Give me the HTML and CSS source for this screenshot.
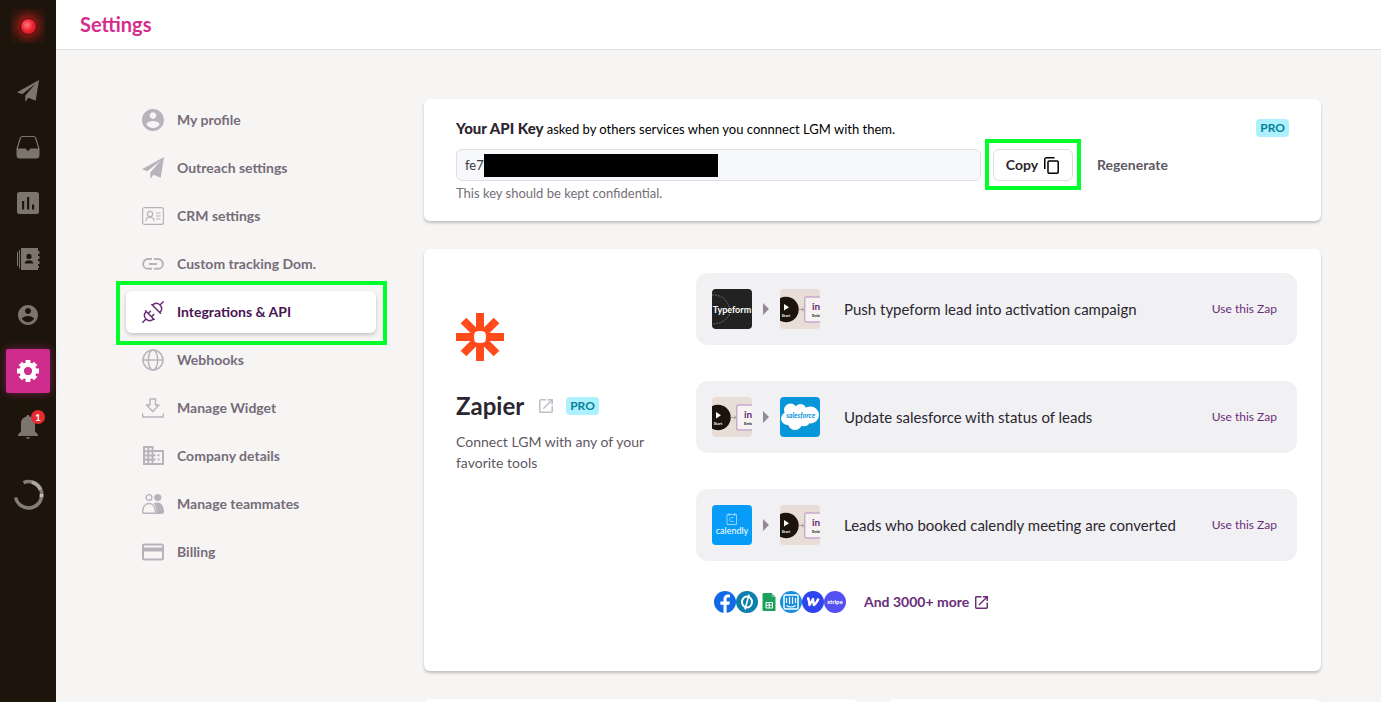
FILE: index.html
```html
<!DOCTYPE html>
<html lang="en">
<head>
<meta charset="utf-8">
<title>Settings</title>
<link rel="stylesheet" href="styles.css">
</head>
<body>
<svg class="defs" aria-hidden="true">
  <symbol id="account" viewBox="2 2 20 20"><path fill="currentColor" d="M12 2C6.480 2 2 6.480 2 12s4.480 10 10 10 10-4.480 10-10S17.520 2 12 2zm0 3c1.660 0 3 1.340 3 3s-1.340 3-3 3-3-1.340-3-3 1.340-3 3-3zm0 14.200c-2.500 0-4.710-1.280-6-3.220.030-1.990 4-3.080 6-3.080 1.990 0 5.970 1.090 6 3.080-1.290 1.940-3.500 3.220-6 3.220z"/></symbol>
  <symbol id="plane" viewBox="0 0 22 22"><path fill="currentColor" d="M22 0 0 12.200 5.200 14.300 18.600 3.800 8.300 15.600V21.800L11.500 17.800 18.700 20.700z"/></symbol>
  <symbol id="open" viewBox="3 3 18 18"><path fill="currentColor" d="M19 19H5V5h7V3H5a2 2 0 0 0-2 2v14a2 2 0 0 0 2 2h14c1.100 0 2-.900 2-2v-7h-2v7zM14 3v2h3.590l-9.830 9.830 1.410 1.410L19 6.410V10h2V3h-7z"/></symbol>
  <symbol id="campaign" viewBox="0 0 40 40">
    <rect width="40" height="40" fill="#e8ddd7"/>
    <circle cx="6" cy="20.500" r="12.700" fill="#1c140a"/>
    <path d="M4 15v6.500l5-3.250z" fill="#fff"/>
    <text class="tile-start" x="6" y="27.500">Start</text>
    <path d="M19 20.500h5m-2-2 2 2-2 2" stroke="#a9a09c" fill="none"/>
    <rect x="24.700" y="8" width="24" height="25" rx="2" fill="#f7f3f2" stroke="#c6aacb" stroke-width="1.400"/>
    <text class="tile-in" x="32" y="21">in</text>
    <text class="tile-embed" x="32" y="27.500">Emb</text>
  </symbol>
</svg>
<div class="app">
  <nav class="rail" aria-label="Main">
    <a class="brand" href="#" aria-label="Home"><span class="orb"></span></a>
    <a class="rail-item" href="#" aria-label="Campaigns"><svg width="22" height="22"><use href="#plane"/></svg></a>
    <a class="rail-item" href="#" aria-label="Inbox"><svg width="24" height="24" viewBox="0 0 24 24"><path d="M1 14 4.500 2.800Q5 1.500 6.500 1.500h11q1.500 0 2 1.300L23 14" fill="none" stroke="currentColor" stroke-width="1.200"/><path fill="currentColor" d="M.500 13.500h9.200l1.300 1.800q1 1.200 2 0l1.300-1.800h9.200v6.500a3.500 3.500 0 0 1-3.500 3.500H4a3.500 3.500 0 0 1-3.500-3.500z"/></svg></a>
    <a class="rail-item" href="#" aria-label="Reports"><svg width="22" height="22" viewBox="0 0 22 22"><path fill="currentColor" fill-rule="evenodd" d="M2.500 0h17A2.500 2.500 0 0 1 22 2.500v17a2.500 2.500 0 0 1-2.500 2.500h-17A2.500 2.500 0 0 1 0 19.500v-17A2.500 2.500 0 0 1 2.500 0zM5 9v8.500h2.200V9zm5-4v12.500h2.200V5zm5 7.500v5h2.200v-5z"/></svg></a>
    <a class="rail-item" href="#" aria-label="Contacts"><svg width="24" height="24" viewBox="0 0 24 24"><path fill="currentColor" fill-rule="evenodd" d="M5 1h17v3h1.500v3H22v2h1.500v3H22v2h1.500v3H22v2h1v2h-1v2H5zm8 5.800a2.600 2.600 0 1 0 0 5.200 2.600 2.600 0 0 0 0-5.200zM8.700 16.500h8.600c0-4.200-8.600-4.200-8.600 0z"/><path stroke="currentColor" d="M3.500 3v18.500M1.500 5v14"/></svg></a>
    <a class="rail-item" href="#" aria-label="Profile"><svg width="20" height="20"><use href="#account"/></svg></a>
    <a class="rail-item active" href="#" aria-label="Settings" aria-current="page"><svg width="22" height="22" viewBox="-11 -11 22 22" stroke="currentColor" fill="none"><circle r="6.300" stroke-width="4.400"/><path stroke-width="4.800" stroke-linejoin="round" d="M0-11v3M0 11V8M-11 0h3M11 0H8M-7.600-7.600l2 2M7.600 7.600l-2-2M-7.600 7.600l2-2M7.600-7.600l-2 2"/></svg></a>
    <a class="rail-item" href="#" aria-label="Notifications, 1 new"><svg width="20" height="24" viewBox="0 0 20 24"><path fill="currentColor" d="M10 0c1 0 1.500.600 1.500 1.600C15.200 2.400 17 5.200 17 9v7.500l3 3V21H0v-1.500l3-3V9c0-3.800 1.800-6.600 5.500-7.400C8.500.600 9 0 10 0zM8 22.200h4c0 2.200-4 2.200-4 0z"/></svg><span class="count">1</span></a>
    <div class="loader" role="status" aria-label="Loading"><svg width="32" height="32" viewBox="0 0 32 32" fill="none" stroke="#827d77" stroke-width="3.600"><path d="M3.700 18.500A13.200 13.200 0 1 0 11.500 3.600"/><path stroke="#aaa6a2" d="M20 3.200a13.400 13.400 0 0 1 8.500 7.600"/><path stroke="#c4c0bc" d="M29.400 15v3"/></svg></div>
  </nav>
  <div class="page">
    <header class="topbar"><h1>Settings</h1></header>
    <div class="content">
      <nav class="menu" aria-label="Settings sections">
        <a href="#"><svg width="22" height="22"><use href="#account"/></svg>My profile</a>
        <a href="#"><svg width="22" height="22"><use href="#plane"/></svg>Outreach settings</a>
        <a href="#"><svg width="22" height="22" viewBox="0 0 22 22" fill="none" stroke="currentColor" stroke-width="1.200"><rect x=".600" y="2.600" width="20.800" height="16.800" rx="2"/><circle cx="8" cy="9" r="2.600"/><path d="M4 16c0-5 8-5 8 0M14 8h4.500M14 11h4.500M14 14h4.500"/></svg>CRM settings</a>
        <a href="#"><svg width="22" height="22" viewBox="0 0 22 22" fill="none" stroke="currentColor" stroke-width="2"><path d="M10 6H6a4.900 4.900 0 0 0 0 9.800h4M12 6h4a4.900 4.900 0 0 1 0 9.800h-4M7 10.900h8"/></svg>Custom tracking Dom.</a>
        <a class="active" href="#" aria-current="page"><svg width="22" height="22" viewBox="0 0 22 22" fill="none" stroke="currentColor" stroke-width="1.500" stroke-linecap="round"><path d="M.800 21.200 4 18M18 4l3.200-3.200M3.500 9.800l8.700 8.700M9.800 3.500l8.700 8.700M4.300 10.600C1.600 12.600 1.800 15.800 4 18s5.400 2.400 7.400-.300M10.600 4.300C12.600 1.600 15.800 1.800 18 4s2.400 5.400-.300 7.400M6.200 12.500l2.200-2.200M9.500 15.800l2.200-2.200"/></svg>Integrations &amp; API</a>
        <a href="#"><svg width="22" height="22" viewBox="0 0 22 22" fill="none" stroke="currentColor" stroke-width="1.500"><circle cx="11" cy="11" r="10"/><ellipse cx="11" cy="11" rx="4.700" ry="10"/><path d="M1 11h20"/></svg>Webhooks</a>
        <a href="#"><svg width="22" height="22" viewBox="0 0 22 22" fill="none" stroke="currentColor" stroke-width="1.400" stroke-linejoin="round"><path d="M8 2h5.500v6H17l-6.300 6.500L4.500 8H8zM.700 16.500V20h20.600v-3.500"/></svg>Manage Widget</a>
        <a href="#"><svg width="22" height="22" viewBox="0 0 22 22"><path fill="currentColor" fill-rule="evenodd" d="M1 1h10.500v4H22v15H1zm2 2v2.200h2.300V3zm4.300 0v2.200h2.300V3zM3 7.200v2.200h2.300V7.200zm4.300 0v2.200h2.300V7.200zM3 11.400v2.200h2.300v-2.200zm4.300 0v2.200h2.300v-2.200zM3 15.700v2.200h2.300v-2.200zm4.300 0v2.200h2.300v-2.200zM11.500 7v2.300h2v2h-2v2.200h2v2h-2V18H20V7zm4 2.300h2v2h-2zm0 4.200h2v2h-2z"/></svg>Company details</a>
        <a href="#"><svg width="22" height="22" viewBox="0 0 22 22"><circle cx="7" cy="4.500" r="2.900" fill="none" stroke="currentColor" stroke-width="1.400"/><circle cx="15.800" cy="4.500" r="3.600" fill="currentColor"/><path d="M.700 19C.700 14 3 10.500 7 10.500s6.300 3.500 6.300 8.500c0 1-.500 1.300-1.300 1.300H2C1.200 20.300.700 20 .700 19z" fill="none" stroke="currentColor" stroke-width="1.400"/><path d="M11.500 10.600c1.300-.700 2.700-1 4-1 4 0 6.500 4.400 6.500 9 0 1.500-.700 2.400-2 2.400h-8c3 0 3.500-6-.500-10.400z" fill="currentColor"/></svg>Manage teammates</a>
        <a href="#"><svg width="22" height="22" viewBox="0 0 22 22"><path fill="currentColor" fill-rule="evenodd" d="M2.500 2.500h17A2.300 2.300 0 0 1 22 4.800v12.400a2.300 2.300 0 0 1-2.500 2.300h-17A2.300 2.300 0 0 1 0 17.200V4.800a2.300 2.300 0 0 1 2.500-2.300zM2 4.500v2h18v-2zm0 6v7h18v-7z"/></svg>Billing</a>
      </nav>
      <main class="cards">
        <section class="card api">
          <div class="api-head">
            <label for="key"><strong>Your API Key</strong> asked by others services when you connnect LGM with them.</label>
            <span class="pro">PRO</span>
          </div>
          <div class="key-row">
            <div class="key-field"><input id="key" type="text" value="fe7" readonly><span class="redaction"></span></div>
            <button class="copy" type="button">Copy <svg width="15" height="17" viewBox="0 0 15 17" fill="none" stroke="currentColor" stroke-width="1.500"><path d="M.750 12V2.500A1.700 1.700 0 0 1 2.500.800H10.500"/><rect x="4" y="4" width="10.200" height="12.200" rx="1"/></svg></button>
            <button class="regenerate" type="button">Regenerate</button>
          </div>
          <p class="hint">This key should be kept confidential.</p>
        </section>
        <section class="card zapier">
          <div class="about">
            <svg width="48" height="48" viewBox="-24 -24 48 48"><path stroke="#ff4a1c" stroke-width="8" d="M0-24v48M-24 0h48M-16.500-16.500l33 33M-16.500 16.500l33-33"/><path fill="#fff" d="M-5-5Q0-7 5-5 7 0 5 5 0 7-5 5-7 0-5-5z"/></svg>
            <div class="title"><h2>Zapier</h2><a href="#" aria-label="Open Zapier"><svg width="14" height="14"><use href="#open"/></svg></a><span class="pro">PRO</span></div>
            <p>Connect LGM with any of your favorite tools</p>
          </div>
          <div class="zaps">
            <article class="zap">
              <svg class="tile" viewBox="0 0 40 40"><rect width="40" height="40" fill="#222"/><path d="M0 6c12-1 17 9 18 15s-6 14-18 14" fill="none" stroke="#858585" stroke-width=".700" stroke-dasharray="2 1"/><text class="tile-typeform" x="20" y="23.500">Typeform</text></svg>
              <span class="arrow"></span>
              <svg class="tile"><use href="#campaign"/></svg>
              <p>Push typeform lead into activation campaign</p><a href="#">Use this Zap</a>
            </article>
            <article class="zap">
              <svg class="tile"><use href="#campaign"/></svg>
              <span class="arrow"></span>
              <svg class="tile" viewBox="0 0 40 40"><rect width="40" height="40" fill="#0797d9"/><g fill="#fff"><circle cx="10.500" cy="13" r="6.500"/><circle cx="7.500" cy="21.500" r="6.500"/><circle cx="20.500" cy="13" r="6"/><circle cx="30.500" cy="18" r="8.500"/><circle cx="15" cy="26" r="7"/><circle cx="24" cy="23" r="6.300"/><rect x="9" y="12" width="21" height="13"/></g><text class="tile-sales" x="20.500" y="20.500">salesforce</text></svg>
              <p>Update salesforce with status of leads</p><a href="#">Use this Zap</a>
            </article>
            <article class="zap">
              <svg class="tile" viewBox="0 0 40 40"><rect width="40" height="40" fill="#069cf8"/><path d="M15 9.500h9.500v10H15zM17 8v3M22.500 8v3M21.500 12.500c-5-1-5 5 0 4" fill="none" stroke="#b5e1ff" stroke-width=".800"/><text class="tile-calendly" x="20" y="29">calendly</text></svg>
              <span class="arrow"></span>
              <svg class="tile"><use href="#campaign"/></svg>
              <p>Leads who booked calendly meeting are converted</p><a href="#">Use this Zap</a>
            </article>
            <div class="more">
              <div class="apps">
                <svg viewBox="0 0 22 22"><circle cx="11" cy="11" r="11" fill="#1269e8"/><path fill="#fff" d="M9.500 22v-8.200H6.400v-3.200h3.100V8.200c0-3 1.800-4.600 4.500-4.600h2v3h-1.700c-1.300 0-1.700.700-1.700 1.700v2.300h3.300l-.500 3.200h-2.800V22z"/></svg>
                <svg viewBox="0 0 22 22"><circle cx="11" cy="11" r="11" fill="#0b7fad"/><g fill="none" stroke="#fff"><ellipse cx="11" cy="11" rx="5" ry="5.500" stroke-width="2"/><path stroke-width="1.600" d="M9 18.500 13 3.500"/></g></svg>
                <svg viewBox="0 0 22 22"><path fill="#1b9f5b" d="M6 2h7.500l4 4v14H6Q4.500 20 4.500 18.500v-15Q4.500 2 6 2z"/><path fill="#65c38f" d="m13.500 2 4 4h-4z"/><path fill="none" stroke="#fff" d="M8 11.500h6.500V17H8zm0 2.700h6.500M11.200 11.500V17"/></svg>
                <svg viewBox="0 0 22 22"><circle cx="11" cy="11" r="11" fill="#168ede"/><rect x="4" y="4" width="14" height="14" rx="1.500" fill="#168ede" stroke="#fff" stroke-width="1.500"/><path fill="none" stroke="#fff" stroke-width="1.200" d="M6.500 7v5M9.500 6v7M12.500 6v7M15.500 7v5M6.500 14.500c2.500 2 6.500 2 9 0"/></svg>
                <svg viewBox="0 0 22 22"><circle cx="11" cy="11" r="11" fill="#2f43ee"/><path fill="none" stroke="#fff" stroke-width="2.300" stroke-linejoin="round" d="M5 7.500h1.500l1 6.500 3.500-6 .800 6c2.200-1.200 3.700-4 4.700-6.500"/></svg>
                <svg viewBox="0 0 22 22"><circle cx="11" cy="11" r="11" fill="#5450f3"/><text class="tile-stripe" x="11" y="13">stripe</text></svg>
              </div>
              <a href="#">And 3000+ more <svg width="13" height="13"><use href="#open"/></svg></a>
            </div>
          </div>
        </section>
        <div class="pair"><section class="card next"></section><section class="card next"></section></div>
      </main>
    </div>
  </div>
</div>
</body>
</html>
```

FILE: styles.css
```css
* { box-sizing: border-box; }
body { margin: 0; font: 14px/20px Lato, "Open Sans", sans-serif; color: #2c2630; background: #f6f5f4; }
h1, h2, p { margin: 0; }
a { color: inherit; text-decoration: none; }
button, input { font: inherit; color: inherit; }
svg { display: block; flex: none; }
.defs { position: absolute; width: 0; height: 0; }

.app { display: flex; height: 100vh; overflow: hidden; }
.rail { flex: none; width: 56px; background: #1d150b; display: flex; flex-direction: column; align-items: center; gap: 12px; padding-top: 9px; color: #7b756e; }
.brand { width: 34px; height: 34px; margin-bottom: 14px; display: grid; place-items: center; background: radial-gradient(circle, #b01b1e 20%, #57170f 50%, #2a150c 75%); }
.orb { width: 17px; height: 17px; border-radius: 50%; border: 1px solid #4a0d10; background: radial-gradient(circle at 40% 40%, #ff7880, #ee2530 45%, #b3131c); }
.rail-item { position: relative; width: 44px; height: 44px; display: grid; place-items: center; border-radius: 2px; }
.rail-item.active { background: #cf2d8d; color: #fff; box-shadow: 0 0 8px #a92373a0; }
.count { position: absolute; top: 5px; right: 5px; width: 14px; height: 14px; border-radius: 50%; background: #e62a32; color: #fff; font-size: 10px; line-height: 14px; font-weight: 700; text-align: center; }
.loader { margin-top: 18px; }

.page { flex: 1; min-width: 0; display: flex; flex-direction: column; }
.topbar { flex: none; background: #fff; border-bottom: 1px solid #e0dfe2; padding: 10px 24px 11px; }
h1 { font-size: 20px; line-height: 28px; font-weight: 700; color: #d52d8c; }
.content { display: flex; gap: 48px; padding: 49px 60px 0 70px; }

.menu { flex: none; width: 250px; display: flex; flex-direction: column; gap: 6px; color: #766c79; font-weight: 700; }
.menu a { position: relative; height: 42px; padding: 0 16px; display: grid; grid-template-columns: 22px 1fr; gap: 13px; align-items: center; border-radius: 6px; }
.menu svg { color: #b8b2bb; justify-self: center; }
.menu .active { background: #fff; color: #481653; box-shadow: 0 2px 4px #00000033; }
.menu .active svg { color: #692d78; }
.menu .active::after, .copy::after { content: ""; position: absolute; border: 4px solid #00ff2b; pointer-events: none; }
.menu .active::after { inset: -10px -11px -12px -10px; }
.copy::after { inset: -11px -9px -10px; }

.cards { flex: 1; min-width: 0; display: flex; flex-direction: column; gap: 28px; }
.card { background: #fff; border-radius: 6px; box-shadow: 0 2px 3px #00000038; }
.api { padding: 19px 32px 18px; }
.api-head { display: flex; justify-content: space-between; align-items: center; height: 20px; margin-bottom: 11px; color: #000; font-size: 13px; }
.api-head strong { font-size: 15px; font-weight: 900; color: #2c2630; }
.pro { background: #adf1ff; color: #087f99; border-radius: 4px; padding: 0 4px; font-size: 12px; line-height: 18px; font-weight: 700; }
.key-row { display: flex; gap: 12px; align-items: center; }
.key-field { position: relative; flex: 0 1 63%; }
.key-field input { display: block; width: 100%; height: 32px; border: 1px solid #dddfe3; border-radius: 6px; background: #f7f8fb; padding: 0 8px; font-size: 13px; color: #3b3940; }
.redaction { position: absolute; left: 28px; top: 5px; width: 234px; height: 23px; background: #000; }
.copy { position: relative; display: flex; align-items: center; gap: 6px; height: 32px; padding: 0 13px 0 12px; border: 1px solid #dedce0; border-radius: 6px; background: #fff; font-weight: 700; }
.copy svg { color: #000; }
.regenerate { border: 0; background: none; padding: 0 12px; font-weight: 700; color: #5f5763; }
.hint { font-size: 13px; margin-top: 2px; color: #766e7a; }

.zapier { display: grid; grid-template-columns: 208px 1fr; gap: 32px; padding: 24px 24px 57px 32px; }
.about { padding-top: 40px; }
.title { display: flex; align-items: center; height: 30px; margin: 30px 0 10px; }
h2 { font-size: 24px; line-height: 30px; font-weight: 700; margin-right: 15px; }
.title a { color: #c2bfc8; margin-right: 13px; }
.about p { line-height: 21px; color: #5f5763; }
.zaps { display: flex; flex-direction: column; gap: 36px; }
.zap { height: 72px; display: flex; align-items: center; padding: 0 20px 0 16px; border-radius: 12px; background: #f1f1f4; }
.tile { width: 40px; height: 40px; border-radius: 4px; }
.arrow { width: 6px; margin: 0 11px; border-left: 6px solid #93899b; border-top: 6px solid transparent; border-bottom: 6px solid transparent; }
.zap p { flex: 1; padding-left: 24px; font-size: 15px; }
.zap a { font-size: 12px; color: #692d78; }
.more { display: flex; align-items: center; gap: 18px; height: 24px; padding-left: 18px; margin-top: -7px; color: #692d78; font-weight: 700; }
.more a { display: flex; align-items: center; gap: 6px; }
.apps { display: flex; }
.apps svg { width: 22px; height: 22px; }
.pair { display: grid; grid-template-columns: 1fr 1fr; gap: 30px; }
.next { height: 120px; }

.tile-start, .tile-in, .tile-embed, .tile-typeform, .tile-sales, .tile-calendly, .tile-stripe { font-family: Lato, sans-serif; font-weight: 700; text-anchor: middle; }
.tile-start { font-size: 4px; fill: #fff; }
.tile-in { font-size: 10px; fill: #632a77; text-anchor: start; }
.tile-embed { font-size: 4px; fill: #222; text-anchor: start; }
.tile-typeform { font-size: 9px; fill: #fff; }
.tile-sales { font-size: 7px; font-style: italic; fill: #0797d9; }
.tile-calendly { font-size: 9px; font-weight: 400; fill: #fff; }
.tile-stripe { font-size: 6px; font-weight: 900; fill: #fff; }
```
